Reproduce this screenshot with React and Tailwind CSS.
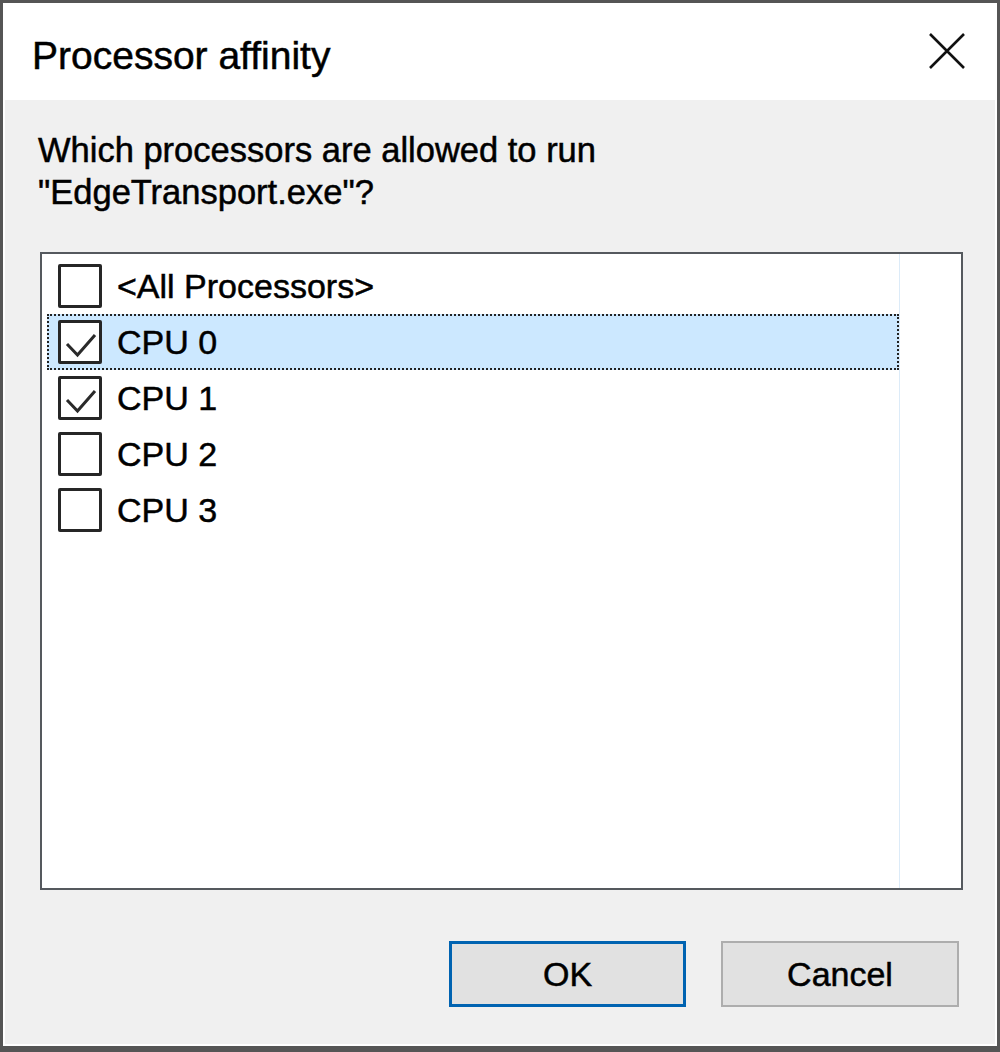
import { useState } from "react";

const rows = [
  { id: "all", label: "<All Processors>", checked: false },
  { id: "cpu0", label: "CPU 0", checked: true },
  { id: "cpu1", label: "CPU 1", checked: true },
  { id: "cpu2", label: "CPU 2", checked: false },
  { id: "cpu3", label: "CPU 3", checked: false },
];

function CheckBox({ checked }) {
  return (
    <div className="w-[44px] h-[44px] shrink-0 border-[3px] border-[#262626] rounded-[2px] bg-white">
      {checked && (
        <svg viewBox="0 0 38 38" className="w-full h-full">
          <path d="M6 21 L16.5 32 L34 12" fill="none" stroke="#2a2a2a" strokeWidth="3" />
        </svg>
      )}
    </div>
  );
}

export default function App() {
  const [items, setItems] = useState(rows);
  const [selected, setSelected] = useState("cpu0");

  function toggle(id) {
    setItems((prev) => prev.map((r) => (r.id === id ? { ...r, checked: !r.checked } : r)));
    setSelected(id);
  }

  return (
    <div
      className="w-[1000px] h-[1052px] bg-[#555] pt-[3px] px-[3px] pb-[6px] [-webkit-text-stroke-width:0.5px]"
      style={{ fontFamily: '"Liberation Sans", Arial, sans-serif' }}
    >
      <div className="h-full flex flex-col bg-white">
        {/* title bar */}
        <div className="h-[97px] shrink-0 flex items-start justify-between pl-[29px] pr-[32px]">
          <div className="pt-[33px] text-[39px] leading-none text-black">Processor affinity</div>
          <svg viewBox="0 0 36 36" className="w-[36px] h-[36px] mt-[30px]">
            <path d="M1 1 L35 35 M35 1 L1 35" stroke="#111" strokeWidth="2.6" />
          </svg>
        </div>

        {/* body */}
        <div className="flex-1 flex flex-col mx-[2px] mb-[2px] bg-[#f0f0f0]">
          <p className="pl-[33px] pt-[29px] text-[34.5px] leading-[42px] text-black">
            Which processors are allowed to run
            <br />
            "EdgeTransport.exe"?
          </p>

          <div className="ml-[35px] mr-[32px] mt-[39px] h-[638px] border-2 border-[#55595e] bg-white flex">
            <div className="w-[858px] pt-[4px] pl-[5px] border-r border-[#dcebf8]">
              {items.map((r) => (
                <div
                  key={r.id}
                  onClick={() => toggle(r.id)}
                  className={
                    "h-[56px] flex items-center pl-[9px] gap-[15px] text-[34px] text-black border-2 " +
                    (selected === r.id
                      ? "bg-[#cce8ff] border-dotted border-[#222]"
                      : "border-transparent")
                  }
                >
                  <CheckBox checked={r.checked} />
                  <span className="leading-none">{r.label}</span>
                </div>
              ))}
            </div>
          </div>

          <div className="flex justify-end gap-[35px] mt-[51px] pr-[36px]">
            <button className="w-[237px] h-[66px] bg-[#e1e1e1] border-[3px] border-[#0063b1] text-[34px] text-black">
              OK
            </button>
            <button className="w-[238px] h-[66px] bg-[#e1e1e1] border-2 border-[#adadad] text-[34px] text-black">
              Cancel
            </button>
          </div>
        </div>
      </div>
    </div>
  );
}
